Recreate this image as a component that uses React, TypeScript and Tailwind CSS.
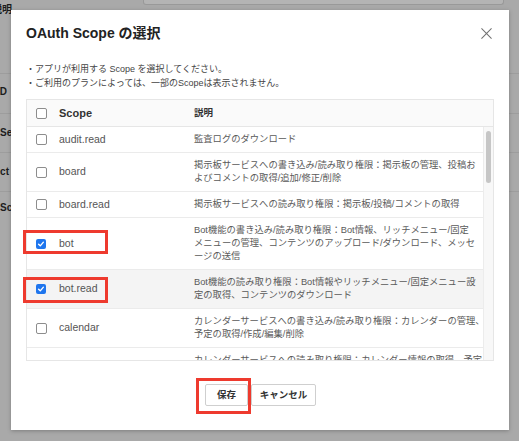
import React from 'react'

const scopes = [
  { id: 'audit.read', lines: ['監査ログのダウンロード'] },
  {
    id: 'board',
    lines: ['掲示板サービスへの書き込み/読み取り権限：掲示板の管理、投稿お', 'よびコメントの取得/追加/修正/削除'],
  },
  { id: 'board.read', lines: ['掲示板サービスへの読み取り権限：掲示板/投稿/コメントの取得'] },
  {
    id: 'bot',
    lines: [
      'Bot機能の書き込み/読み取り権限：Bot情報、リッチメニュー/固定',
      'メニューの管理、コンテンツのアップロード/ダウンロード、メッセ',
      'ージの送信',
    ],
    checked: true,
  },
  {
    id: 'bot.read',
    lines: ['Bot機能の読み取り権限：Bot情報やリッチメニュー/固定メニュー設', '定の取得、コンテンツのダウンロード'],
    checked: true,
    hover: true,
  },
  {
    id: 'calendar',
    lines: ['カレンダーサービスへの書き込み/読み取り権限：カレンダーの管理、', '予定の取得/作成/編集/削除'],
  },
  {
    id: 'calendar.read',
    lines: ['カレンダーサービスへの読み取り権限：カレンダー情報の取得、予定', 'の取得'],
  },
]

function CheckBox({ checked }: { checked?: boolean }) {
  if (checked) {
    return (
      <span className="flex h-[10px] w-[10px] items-center justify-center rounded-[2px] bg-[#1f76ee]">
        <svg viewBox="0 0 10 10" className="h-[8px] w-[8px]">
          <path d="M2 5.3 4.1 7.3 8 2.7" fill="none" stroke="white" strokeWidth="1.7" strokeLinecap="round" strokeLinejoin="round" />
        </svg>
      </span>
    )
  }
  return <span className="block h-[11px] w-[11px] rounded-[2px] border border-[#8d8d8d] bg-white" />
}

export default function App() {
  return (
    <div className="relative h-[441px] w-[519px] overflow-hidden bg-[#a9a9a9] font-['Liberation_Sans','Noto_Sans_CJK_JP',sans-serif] text-[#1c1c1c]">
      {/* page behind the dialog */}
      <div className="flex h-[73px] items-start">
        <div className="-ml-[8px] w-[151px] pt-[2px] text-[10px] font-bold">説明</div>
        <div className="h-[5px] w-[361px] rounded-b-[3px] border-x border-b border-[#999] bg-[#b4b4b4]" />
      </div>
      <div className="flex h-[40px] items-center border-t border-[#9d9d9d] text-[10px] font-bold">
        <span className="-ml-[3px] pb-[5px]">ID</span>
      </div>
      <div className="flex h-[39px] items-center border-t border-[#9d9d9d] text-[10px] font-bold">
        <span className="pb-[2px]">Secret</span>
      </div>
      <div className="flex h-[39px] items-center border-t border-[#9d9d9d] text-[10px] font-bold">
        <span className="-ml-[31px] pb-[2px]">Redirect URL</span>
      </div>
      <div className="flex h-[30px] items-center border-t border-[#9d9d9d] text-[10px] font-bold">
        <span className="pt-[2px]">Scope</span>
      </div>

      {/* dialog */}
      <div className="absolute left-[11px] top-[10px] flex h-[420px] w-[498px] flex-col bg-white px-[15px] pt-[14px] shadow-[0_1px_4px_rgba(0,0,0,0.25)]">
        <div className="flex h-[18px] items-center justify-between">
          <h1 className="text-[14px] font-bold leading-[18px] text-[#222]">OAuth Scope の選択</h1>
          <svg viewBox="0 0 12 12" className="mr-[2px] h-[11px] w-[11px]">
            <path d="M0.5 0.5 11.5 11.5M11.5 0.5 0.5 11.5" stroke="#707070" strokeWidth="1.1" fill="none" />
          </svg>
        </div>

        <div className="mt-[21px] text-[9px] leading-[13.5px] text-[#444]">
          <p>・アプリが利用する Scope を選択してください。</p>
          <p>・ご利用のプランによっては、一部のScopeは表示されません。</p>
        </div>

        <div className="mt-[9px] border border-[#e6e6e6]">
          <div className="flex h-[27px] items-center border-b border-[#e6e6e6] bg-[#fafafa] text-[11px] font-bold text-[#333]">
            <div className="w-[32px] pl-[9px]">
              <CheckBox />
            </div>
            <div className="w-[135px]">Scope</div>
            <div className="text-[9.5px]">説明</div>
          </div>
          <div className="flex h-[233px]">
            <div className="flex-1 overflow-hidden">
              {scopes.map((s) => (
                <div
                  key={s.id}
                  className={
                    s.hover
                      ? 'flex items-center border-b border-[#ebebeb] bg-[#f4f4f4]'
                      : 'flex items-center border-b border-[#ebebeb] bg-white'
                  }
                >
                  <div className="w-[32px] shrink-0 pl-[9px]">
                    <CheckBox checked={s.checked} />
                  </div>
                  <div className="w-[135px] shrink-0 text-[10.5px] text-[#555]">{s.id}</div>
                  <div className="flex-1 py-[6px] text-[9.3px] leading-[13px] whitespace-nowrap text-[#5a5a5a]">
                    {s.lines.map((line) => (
                      <p key={line}>{line}</p>
                    ))}
                  </div>
                </div>
              ))}
            </div>
            <div className="w-[10px] border-l border-[#ececec] bg-[#f8f8f8] pl-[2px] pt-[4px]">
              <div className="h-[52px] w-[5px] rounded-full bg-[#c6c6c6]" />
            </div>
          </div>
        </div>

        <div className="mt-[23px] flex justify-center gap-[3px] pl-[1px]">
          <button className="h-[22px] w-[43px] rounded-[2px] border border-[#cfcfcf] bg-white text-[9.5px] font-bold text-[#333]">
            保存
          </button>
          <button className="h-[22px] w-[65px] rounded-[2px] border border-[#cfcfcf] bg-white text-[9.5px] font-bold text-[#333]">
            キャンセル
          </button>
        </div>
      </div>

      {/* red annotation frames */}
      <div className="absolute left-[23px] top-[230px] h-[24px] w-[85px] border-[3px] border-[#ee3a2e]" />
      <div className="absolute left-[23px] top-[277px] h-[26px] w-[85px] border-[3px] border-[#ee3a2e]" />
      <div className="absolute left-[196px] top-[378px] h-[36px] w-[55px] border-[3px] border-[#ee3a2e]" />
    </div>
  )
}
